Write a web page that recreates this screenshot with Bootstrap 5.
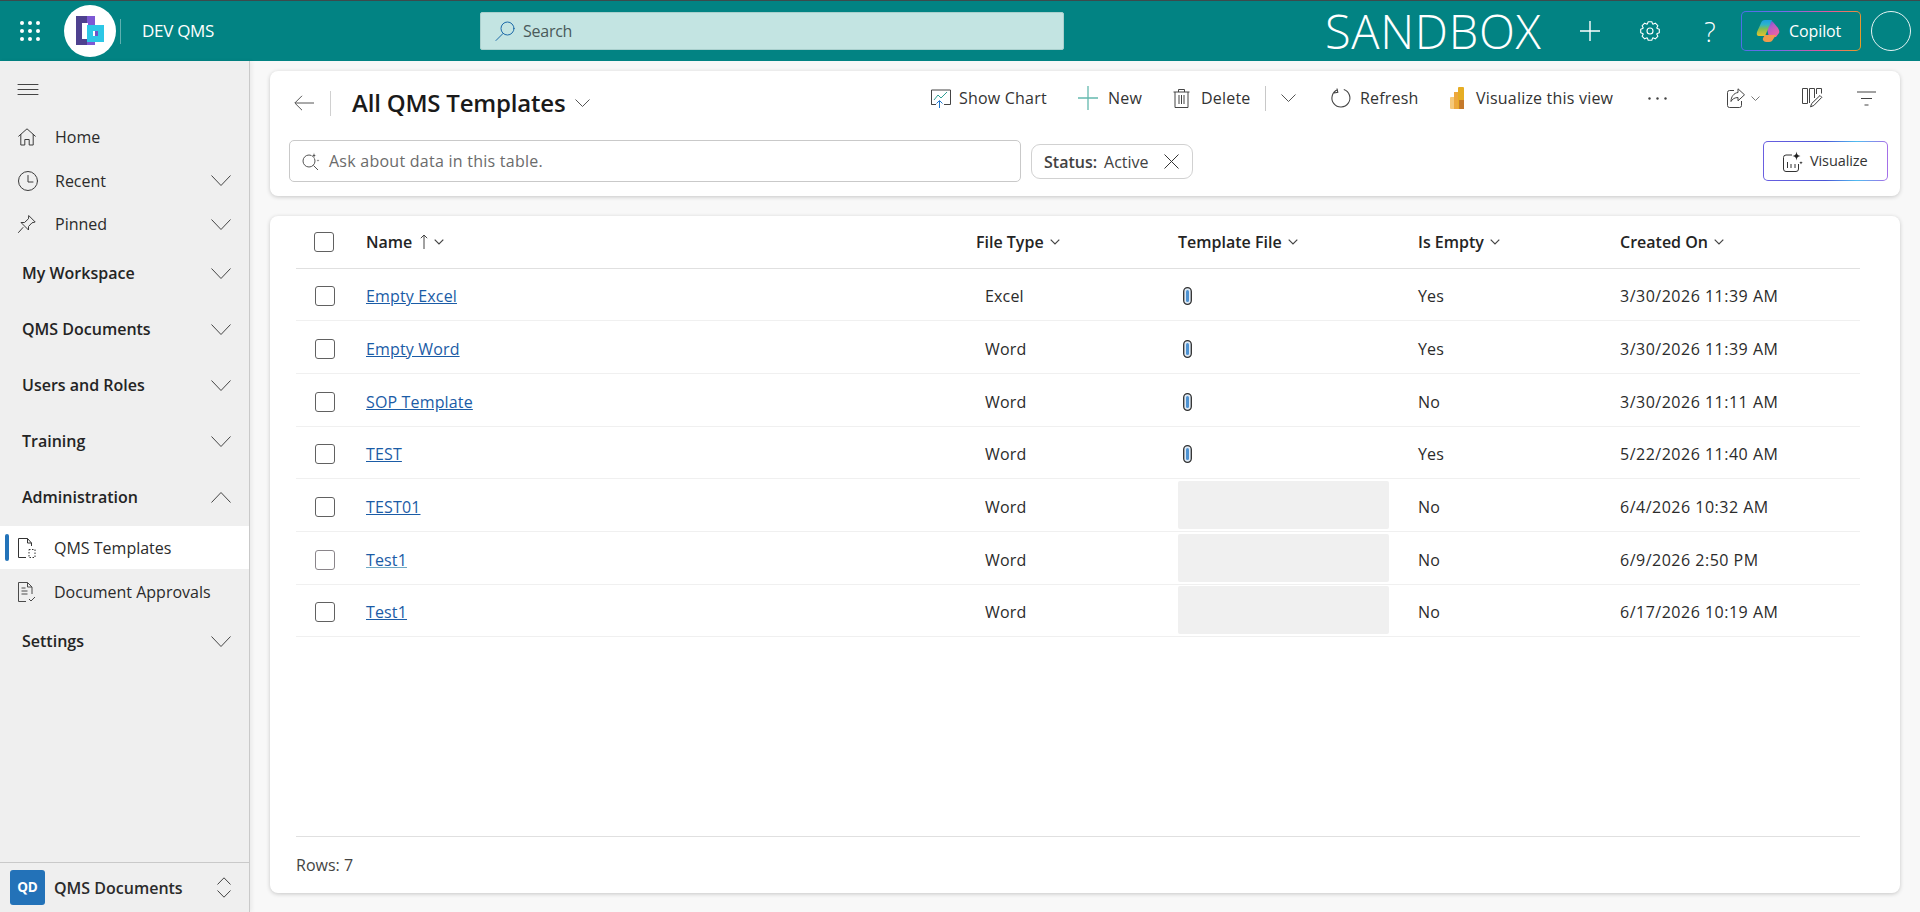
<!doctype html>
<html lang="en">
<head>
<meta charset="utf-8">
<title>All QMS Templates</title>
<link href="https://cdn.jsdelivr.net/npm/bootstrap@5.3.0/dist/css/bootstrap.min.css" rel="stylesheet">
<style>
html,body{height:100%;overflow:hidden}
body{font-family:"Open Sans","Noto Sans","Liberation Sans",sans-serif;font-size:16px;letter-spacing:0;color:#242424;background:#f8f8f8}
svg{display:block;flex:none;overflow:visible}
.ln{fill:none;stroke:currentColor;stroke-width:1;stroke-linecap:round;stroke-linejoin:round}
.topbar{height:61px;background:#028383;border-top:1px solid #3c4a4c;color:#fff}
.wafflebox{margin-left:20px}
.logo-sep{width:1px;height:25px;background:#5fb0b0;margin-left:4px}
.appname{margin-left:21px;width:74px;font-size:17px;letter-spacing:-.3px;white-space:nowrap}
.searchbox{margin-left:264px;width:584px;height:38px;background:#c3e4e2;border:1px solid #a9cfcd;color:#4a5a5a;font-size:16px;letter-spacing:-.25px;padding-left:14px;gap:8px;border-radius:2px}
.envname{margin-left:261px;width:216px;font-size:47px;font-weight:300;letter-spacing:.7px;line-height:1;white-space:nowrap}
.plusbtn{margin-left:39px}
.gearbtn{margin-left:40px}
.helpbtn{margin-left:40px;width:20px;font-size:27px;font-weight:300;line-height:1}
.copilotbtn{margin-left:21px;width:120px;height:40px;border:1px solid transparent;border-radius:5px;background:linear-gradient(#028383,#028383) padding-box,linear-gradient(100deg,#4a6fe8 0%,#7a6ae8 35%,#e8559a 70%,#e8a020 100%) border-box;padding-left:14px;gap:9px;font-size:16px;letter-spacing:-.1px}
.avatar{margin-left:10px;width:40px;height:40px;border:1px solid #e6f4f4;border-radius:50%}
.shell{height:851px}
.sidenav{width:250px;background:#efefef;border-right:1px solid #c9c9c9;box-shadow:2px 0 4px rgba(0,0,0,.06);color:#2b2b2b;font-size:16px}
.menu-toggle{height:54px;padding:2px 0 0 18px}
.navrow{height:44px;padding:0 18px 1px}
.navrow.short{height:43px}
.navrow .lbl{margin-left:19px}
.navrow .lbl.after-clock{margin-left:17px}
.navrow .chev,.sect .chev{margin-left:auto}
.sect{height:56px;padding:0 18px 2px 22px;font-weight:600;color:#242424}
.subrow{height:43px;padding:0 18px 0 18px;position:relative}
.subrow.tall{height:45px;padding-top:1px}
.subrow .lbl{margin-left:18px}
.subrow.sel{background:#fff}
.subrow.sel::before{content:"";position:absolute;left:5px;top:8px;width:4px;height:27px;border-radius:2px;background:#2373b9}
.areabar{height:50px;border-top:1px solid #c9c9c9;padding:0 18px 0 10px;font-weight:600;font-size:16px}
.qd-tile{width:35px;height:35px;background:#2372b8;border-radius:3px;color:#fff;font-size:13.5px;font-weight:700;margin-right:9px}
.workarea{padding:10px 20px 19px;gap:20px;min-width:0}
.panel{background:#fff;border-radius:8px;box-shadow:0 1px 4px rgba(0,0,0,.2)}
.cmdpanel{height:125px}
.cmdtop{height:54px}
.titlegrp{padding:10px 0 0 24px}
.titlesep{width:1px;height:25px;background:#d0d0d0;margin:0 21px 0 16px}
.viewtitle{font-size:24px;font-weight:600;letter-spacing:-.2px;line-height:1;color:#1a1a1a}
.titlechev{margin-left:10px}
.cmdgrid{display:grid;grid-template-columns:147px 95px 92px 16px 50px 119px 198px 79px 75px 55px 19px;align-items:center;padding-right:24px}
.cmd{display:flex;align-items:center;color:#333;white-space:nowrap;letter-spacing:.2px}
.cmdsep{width:1px;height:25px;background:#c8c8c8}
.cmdlow{padding:15px 12px 0 19px}
.askbox{width:732px;height:42px;border:1px solid #c9c9c9;border-radius:5px;padding-left:12px;gap:9px;color:#6b6b6b;letter-spacing:.25px}
.chipbox{margin-left:10px;width:162px;height:35px;border:1px solid #d1d1d1;border-radius:9px;padding-left:12px;color:#424242}
.chipbox b{font-weight:600;margin-right:7px}
.chipx{margin-left:auto;margin-right:13px}
.vizbtn{width:125px;height:40px;border:1px solid transparent;border-radius:5px;background:linear-gradient(#fff,#fff) padding-box,linear-gradient(90deg,#6a5fe0 0%,#4a55d8 50%,#50bdf0 75%,#a56ee8 100%) border-box;padding-left:19px;gap:7px;font-size:14.5px;letter-spacing:-.1px;color:#333;margin-top:1px;margin-left:auto}
.gridpanel{padding:0 40px 0 26px}
.datatbl{width:100%;table-layout:fixed;border-collapse:collapse;margin:0}
.datatbl th{height:52px;font-weight:600;color:#242424;border-bottom:1px solid #e0e0e0;padding:0;white-space:nowrap}
.datatbl td{height:52.7px;border-bottom:1px solid #f0f0f0;padding:4px 0 0;color:#2b2b2b;letter-spacing:.15px}
.datatbl td.boxed{padding-top:0}
.datatbl td.stamp{letter-spacing:.5px}
.thin{display:flex;align-items:center;gap:6px}
.sortup{margin-left:2px}
.col-chk{width:54px}
.col-name{width:610px}
.col-type{width:202px}
.col-file{width:240px}
.col-empty{width:202px}
.pl-a{padding-left:16px!important}
.pl-b{padding-left:25px!important}
.boxchk{width:20px;height:20px;border:1px solid #616161;border-radius:3px;background:#fff;margin-left:19px}
.boxchk.hd{margin-left:18px}
.boxchk.hov{border-color:#8a858a;border-width:1.5px}
.reclink{color:#1b5ca6}
.reclink.hov{text-decoration-color:#6fa8c4}
.clip{margin-left:5px}
.emptycell{width:211px;height:48px;background:#f0f0f0;border-radius:2px}
.gridfoot{height:57px;border-top:1px solid #e0e0e0;color:#444}
</style>
</head>
<body>
<svg width="0" height="0" class="position-absolute">
  <defs>
    <symbol id="nchev" viewBox="0 0 20 11"><path d="M.5.500 10 10.500 19.500.5" fill="none" stroke="#444"/></symbol>
    <symbol id="hchev" viewBox="0 0 10 6"><path d="M.7.700 5 5 9.300.7" fill="none" stroke="#444" stroke-width="1.200"/></symbol>
    <symbol id="clipg" viewBox="0 0 9 18"><rect x=".7" y=".7" width="7.600" height="16.600" rx="3.800" fill="#dfeaf5" stroke="#2f2f2f" stroke-width="1.300"/><rect x="3" y="3" width="3" height="12" rx="1.500" fill="#4f93d2"/></symbol>
  </defs>
</svg>
<header class="topbar d-flex align-items-center">
  <svg class="wafflebox" width="20" height="20" viewBox="0 0 20 20" fill="#fff"><circle cx="2" cy="2" r="2"/><circle cx="10" cy="2" r="2"/><circle cx="18" cy="2" r="2"/><circle cx="2" cy="10" r="2"/><circle cx="10" cy="10" r="2"/><circle cx="18" cy="10" r="2"/><circle cx="2" cy="18" r="2"/><circle cx="10" cy="18" r="2"/><circle cx="18" cy="18" r="2"/></svg>
  <svg class="ms-4" width="52" height="52" viewBox="0 0 52 52"><circle cx="26" cy="26" r="26" fill="#fff"/><rect x="12" y="11" width="19" height="29" fill="#4e418f"/><rect x="23" y="11" width="8" height="29" fill="#7d58d4"/><rect x="18" y="18" width="6" height="16" fill="#fff"/><rect x="23" y="20" width="17" height="17" fill="#2cc7e6"/><rect x="29" y="26" width="5" height="5" fill="#fff"/><rect x="31" y="26" width="3" height="5" fill="#6f52c8"/></svg>
  <div class="logo-sep"></div>
  <div class="appname">DEV QMS</div>
  <div class="searchbox d-flex align-items-center">
    <svg width="20" height="20" viewBox="0 0 20 20" class="ln" style="color:#1d6aa8"><circle cx="12.500" cy="7.500" r="6.500"/><path d="M8 12.500 1 19.500"/></svg>
    <span>Search</span>
  </div>
  <div class="envname">SANDBOX</div>
  <svg class="plusbtn" width="20" height="20" viewBox="0 0 20 20"><path d="M10 0v20M0 10h20" stroke="#fff" stroke-width="1.400"/></svg>
  <svg class="gearbtn" width="20" height="20" viewBox="-10 -10 20 20" fill="none" stroke="#fff" stroke-width="1.100" stroke-linejoin="round"><circle r="3"/><path id="gt" d="M-2.760-6.650-1.800-9.300H1.800L2.760-6.650"/><use href="#gt" transform="rotate(45)"/><use href="#gt" transform="rotate(90)"/><use href="#gt" transform="rotate(135)"/><use href="#gt" transform="rotate(180)"/><use href="#gt" transform="rotate(225)"/><use href="#gt" transform="rotate(270)"/><use href="#gt" transform="rotate(315)"/></svg>
  <div class="helpbtn text-center">?</div>
  <div class="copilotbtn d-flex align-items-center">
    <svg width="24" height="22" viewBox="0 0 24 22"><defs><linearGradient id="cpa" x1="0" y1="0" x2="0" y2="1"><stop offset="0" stop-color="#1c9fe3"/><stop offset=".3" stop-color="#2fb5c8"/><stop offset=".55" stop-color="#7fbd52"/><stop offset="1" stop-color="#e9c22b"/></linearGradient><linearGradient id="cpb" x1="0" y1="0" x2=".6" y2="1"><stop offset="0" stop-color="#3f5fd6"/><stop offset=".4" stop-color="#b05cc8"/><stop offset="1" stop-color="#ef62a2"/></linearGradient></defs><path d="M11 9 14 2Q15 0 17 2L22 8Q24 11 23 13L20 17H13Z" fill="url(#cpb)"/><path d="M9 0h7L9 16H3Q0 16 1 12L5 3Q6 0 9 0Z" fill="url(#cpa)"/><path d="M9 15h11l-4 6q-1 1-3 1H10Q6 21 7 18Z" fill="#ee9a4c"/></svg>
    <span>Copilot</span>
  </div>
  <div class="avatar"></div>
</header>

<div class="shell d-flex">
  <nav class="sidenav d-flex flex-column flex-shrink-0">
    <div class="menu-toggle d-flex align-items-center">
      <svg width="20" height="11" viewBox="0 0 20 11" class="ln" style="color:#444"><path d="M0 .5h20M0 5.500h20M0 10.500h20"/></svg>
    </div>
    <div class="navrow d-flex align-items-center">
      <svg width="18" height="18" viewBox="0 0 18 18" class="ln" style="color:#3b3b3b"><path d="M.7 8.200 9 .8l8.300 7.400M2.800 6.500V17h4V11.500h4.400V17h4V6.500"/></svg>
      <span class="lbl">Home</span>
    </div>
    <div class="navrow d-flex align-items-center">
      <svg width="20" height="20" viewBox="0 0 20 20" class="ln" style="color:#3b3b3b"><circle cx="10" cy="10" r="9.500"/><path d="M10 4.500V11h5"/></svg>
      <span class="lbl after-clock">Recent</span>
      <svg class="chev" width="20" height="11"><use href="#nchev"/></svg>
    </div>
    <div class="navrow short d-flex align-items-center">
      <svg width="18" height="18" viewBox="0 0 18 18" class="ln" style="color:#3b3b3b"><path d="M11 .8 17.200 7 14 7.800 10.500 11.500 10.500 15 3 7.500 6.500 7.500 10.200 4Z M5 12.500.5 17.500"/></svg>
      <span class="lbl">Pinned</span>
      <svg class="chev" width="20" height="11"><use href="#nchev"/></svg>
    </div>
    <div class="sect d-flex align-items-center">My Workspace<svg class="chev" width="20" height="11"><use href="#nchev"/></svg></div>
    <div class="sect d-flex align-items-center">QMS Documents<svg class="chev" width="20" height="11"><use href="#nchev"/></svg></div>
    <div class="sect d-flex align-items-center">Users and Roles<svg class="chev" width="20" height="11"><use href="#nchev"/></svg></div>
    <div class="sect d-flex align-items-center">Training<svg class="chev" width="20" height="11"><use href="#nchev"/></svg></div>
    <div class="sect d-flex align-items-center">Administration<svg class="chev" width="20" height="11" viewBox="0 0 20 11" fill="none" stroke="#444"><path d="M.5 10.500 10 .5l9.500 10"/></svg></div>
    <div class="subrow sel d-flex align-items-center">
      <svg width="18" height="20" viewBox="0 0 18 20" fill="none" stroke="#333"><path d="M8 19.500H.500V.500H9.500L13.500 5V8M9.500.5V5h4"/><path d="M11 11.500h6v8h-6z" stroke-dasharray="1.500 1.500"/></svg>
      <span class="lbl">QMS Templates</span>
    </div>
    <div class="subrow tall d-flex align-items-center">
      <svg width="18" height="20" viewBox="0 0 18 20" fill="none" stroke="#4a4a4a"><path d="M8 19.500H.500V.500H9.500L14 5v7M9.500.5V5H14M3.500 6h4M3.500 9h6M3.500 12h6M11 17l2 2 4-4"/></svg>
      <span class="lbl">Document Approvals</span>
    </div>
    <div class="sect d-flex align-items-center">Settings<svg class="chev" width="20" height="11"><use href="#nchev"/></svg></div>
    <div class="areabar d-flex align-items-center mt-auto">
      <div class="qd-tile d-flex align-items-center justify-content-center">QD</div>
      <span>QMS Documents</span>
      <svg class="ms-auto" width="14" height="21" viewBox="0 0 14 21" fill="none" stroke="#444"><path d="M.5 7.500 7 .8l6.500 6.700M.5 13.500 7 20.200l6.500-6.700"/></svg>
    </div>
  </nav>

  <main class="workarea flex-grow-1 d-flex flex-column">
    <section class="panel cmdpanel flex-shrink-0">
      <div class="cmdtop d-flex justify-content-between">
        <div class="titlegrp d-flex align-items-center">
          <svg width="20" height="16" viewBox="0 0 20 16" fill="none" stroke="#555"><path d="M8 .8.800 8 8 15.200M1 8h19"/></svg>
          <div class="titlesep"></div>
          <div class="viewtitle">All QMS Templates</div>
          <svg class="titlechev" width="15" height="8" viewBox="0 0 15 8" fill="none" stroke="#555"><path d="M.5.500 7.500 7.500 14.500.5"/></svg>
        </div>
        <div class="cmdgrid">
          <div class="cmd" style="gap:8px"><svg width="20" height="20" viewBox="0 0 20 20" fill="none"><path d="M5 16.500H.500V2H19.500V16.500H13M.5 16.500h4" stroke="#444"/><path d="M3 12l4-5 3 3 6-6" stroke="#2f9e94"/><path d="M8.500 20v-7M5.500 15.500l3-3 3 3" stroke="#1f75cb"/></svg>Show Chart</div>
          <div class="cmd" style="gap:10px"><svg width="20" height="24" viewBox="0 0 20 24"><path d="M10 0v24M0 12h20" stroke="#64b9ae" stroke-width="1.300"/></svg>New</div>
          <div class="cmd" style="gap:11px"><svg width="17" height="20" viewBox="0 0 17 20" fill="none" stroke="#444"><path d="M.5 4h16M5.500 4V1.500h6V4M2 4v15.500H15V4M6 7v9M8.500 7v9M11 7v9"/></svg>Delete</div>
          <div class="cmd"><div class="cmdsep"></div></div>
          <div class="cmd"><svg width="15" height="8" viewBox="0 0 15 8" fill="none" stroke="#555"><path d="M.5.500 7.500 7.500 14.500.5"/></svg></div>
          <div class="cmd" style="gap:9px"><svg width="20" height="20" viewBox="0 0 20 20" fill="none" stroke="#444" stroke-width="1.100"><path d="M12.800 1.500A9 9 0 1 1 6.500 1.700M6 .5l.800 3.800L3 5"/></svg>Refresh</div>
          <div class="cmd" style="gap:12px"><svg width="14" height="22" viewBox="0 0 14 22"><rect x="0" y="10" width="8" height="12" rx="1" fill="#f5c97a"/><rect x="4" y="5" width="5" height="17" fill="#eda83d"/><rect x="8" y="0" width="6" height="22" rx="1" fill="#e6ad24"/><rect x="9" y="13" width="5" height="9" fill="#c5792a"/></svg>Visualize this view</div>
          <div class="cmd"><svg width="19" height="3" viewBox="0 0 19 3" fill="#444"><circle cx="1.500" cy="1.500" r="1.200"/><circle cx="9.500" cy="1.500" r="1.200"/><circle cx="17.500" cy="1.500" r="1.200"/></svg></div>
          <div class="cmd" style="gap:6px"><svg width="18" height="20" viewBox="0 0 18 20" fill="none" stroke="#444"><path d="M7 2.500H2.500a2 2 0 0 0-2 2v13a2 2 0 0 0 2 2h10a2 2 0 0 0 2-2V13"/><path d="M11 .8l6.500 6-6.500 6V9.500C8 9.500 5 11 4 13.500c0-5 3-8.500 7-9Z"/></svg><svg width="9" height="5" viewBox="0 0 9 5" fill="none" stroke="#777"><path d="M.5.500 4.500 4.500 8.500.5"/></svg></div>
          <div class="cmd"><svg width="20" height="20" viewBox="0 0 20 20" fill="none" stroke="#444"><path d="M.5.500H5.500V15.500H.5ZM7.500 15V.5H12.500V10M14.500 6V.5H19.500V5.500"/><path d="M18 7.500l1.800 1.800-8 8.200-3.300 1.300 1.200-3.300Z" stroke="#3a3a3a"/></svg></div>
          <div class="cmd"><svg width="19" height="15" viewBox="0 0 19 15" fill="none" stroke="#444"><path d="M0 1h19M4 7.500h11M7.500 14h4" stroke-width="1.200"/></svg></div>
        </div>
      </div>
      <div class="cmdlow d-flex align-items-start">
        <div class="askbox d-flex align-items-center">
          <svg width="18" height="20" viewBox="0 0 18 20" fill="none" stroke="#555"><circle cx="7" cy="10" r="6"/><path d="M11.500 14.500 16 19"/><path d="M12 1.500c.3 2 .8 2.700 2.500 3-1.700.3-2.200 1-2.500 3-.3-2-.8-2.700-2.500-3 1.700-.3 2.200-1 2.500-3ZM16 8c.2 1 .5 1.300 1.500 1.500-1 .2-1.300.5-1.500 1.500-.2-1-.5-1.300-1.500-1.500 1-.2 1.300-.5 1.500-1.500Z" fill="#555" stroke="#fff" stroke-width=".4"/></svg>
          <span>Ask about data in this table.</span>
        </div>
        <div class="chipbox d-flex align-items-center mt-1">
          <b>Status:</b><span>Active</span>
          <svg class="chipx" width="15" height="15" viewBox="0 0 15 15" stroke="#333"><path d="M.5.500 14.500 14.500M14.500.5.500 14.500"/></svg>
        </div>
        <div class="vizbtn d-flex align-items-center">
          <svg width="20" height="21" viewBox="0 0 20 21" fill="none" stroke="#333"><path d="M9 4H3a2.500 2.500 0 0 0-2.500 2.500V18A2.500 2.500 0 0 0 3 20.500h10a2.500 2.500 0 0 0 2.500-2.500v-5"/><path d="M4.500 11v6M8 13v4M12 13v4"/><path d="M13.500.5c.4 3 1.300 4 4 4.500-2.700.5-3.600 1.500-4 4.500-.4-3-1.300-4-4-4.500 2.700-.5 3.600-1.500 4-4.500ZM18 10c.2 1.200.6 1.600 1.800 1.800-1.200.2-1.600.6-1.800 1.800-.2-1.200-.6-1.600-1.800-1.800 1.200-.2 1.600-.6 1.800-1.800Z" fill="#222" stroke="none"/></svg>
          <span>Visualize</span>
        </div>
      </div>
    </section>

    <section class="panel gridpanel flex-grow-1 d-flex flex-column">
      <div class="flex-grow-1">
        <table class="datatbl">
          <colgroup><col class="col-chk"><col class="col-name"><col class="col-type"><col class="col-file"><col class="col-empty"><col></colgroup>
          <thead>
            <tr>
              <th><div class="boxchk hd"></div></th>
              <th class="pl-a"><div class="thin">Name <svg class="sortup" width="8" height="15" viewBox="0 0 8 15" fill="none" stroke="#444"><path d="M4 15V1M.8 4.200 4 1l3.200 3.200"/></svg><svg width="10" height="6"><use href="#hchev"/></svg></div></th>
              <th class="pl-a"><div class="thin">File Type<svg width="10" height="6"><use href="#hchev"/></svg></div></th>
              <th class="pl-a"><div class="thin">Template File<svg width="10" height="6"><use href="#hchev"/></svg></div></th>
              <th class="pl-a"><div class="thin">Is Empty<svg width="10" height="6"><use href="#hchev"/></svg></div></th>
              <th class="pl-a"><div class="thin">Created On<svg width="10" height="6"><use href="#hchev"/></svg></div></th>
            </tr>
          </thead>
          <tbody>
            <tr><td><div class="boxchk"></div></td><td class="pl-a"><a class="reclink" href="#">Empty Excel</a></td><td class="pl-b">Excel</td><td class="pl-a"><svg class="clip" width="9" height="18"><use href="#clipg"/></svg></td><td class="pl-a">Yes</td><td class="pl-a stamp">3/30/2026 11:39 AM</td></tr>
            <tr><td><div class="boxchk"></div></td><td class="pl-a"><a class="reclink" href="#">Empty Word</a></td><td class="pl-b">Word</td><td class="pl-a"><svg class="clip" width="9" height="18"><use href="#clipg"/></svg></td><td class="pl-a">Yes</td><td class="pl-a stamp">3/30/2026 11:39 AM</td></tr>
            <tr><td><div class="boxchk"></div></td><td class="pl-a"><a class="reclink" href="#">SOP Template</a></td><td class="pl-b">Word</td><td class="pl-a"><svg class="clip" width="9" height="18"><use href="#clipg"/></svg></td><td class="pl-a">No</td><td class="pl-a stamp">3/30/2026 11:11 AM</td></tr>
            <tr><td><div class="boxchk"></div></td><td class="pl-a"><a class="reclink" href="#">TEST</a></td><td class="pl-b">Word</td><td class="pl-a"><svg class="clip" width="9" height="18"><use href="#clipg"/></svg></td><td class="pl-a">Yes</td><td class="pl-a stamp">5/22/2026 11:40 AM</td></tr>
            <tr><td><div class="boxchk"></div></td><td class="pl-a"><a class="reclink" href="#">TEST01</a></td><td class="pl-b">Word</td><td class="pl-a boxed"><div class="emptycell"></div></td><td class="pl-a">No</td><td class="pl-a stamp">6/4/2026 10:32 AM</td></tr>
            <tr><td><div class="boxchk hov"></div></td><td class="pl-a"><a class="reclink hov" href="#">Test1</a></td><td class="pl-b">Word</td><td class="pl-a boxed"><div class="emptycell"></div></td><td class="pl-a">No</td><td class="pl-a stamp">6/9/2026 2:50 PM</td></tr>
            <tr><td><div class="boxchk"></div></td><td class="pl-a"><a class="reclink" href="#">Test1</a></td><td class="pl-b">Word</td><td class="pl-a boxed"><div class="emptycell"></div></td><td class="pl-a">No</td><td class="pl-a stamp">6/17/2026 10:19 AM</td></tr>
          </tbody>
        </table>
      </div>
      <div class="gridfoot d-flex align-items-center">Rows: 7</div>
    </section>
  </main>
</div>
<script src="https://cdn.jsdelivr.net/npm/bootstrap@5.3.0/dist/js/bootstrap.bundle.min.js"></script>
</body>
</html>
